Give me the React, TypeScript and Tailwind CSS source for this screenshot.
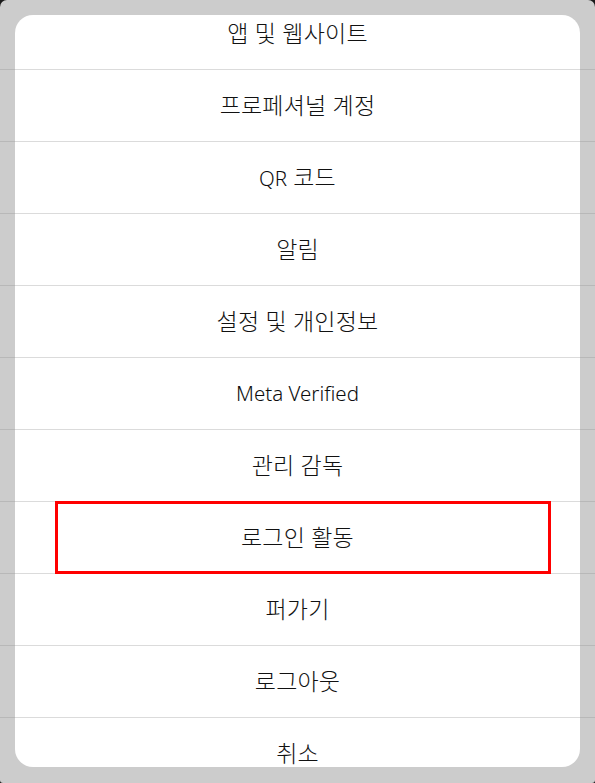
import React from "react";

type Seg = { t: string; latin?: boolean };
const items: Seg[][] = [
  [{ t: "앱 및 웹사이트" }],
  [{ t: "프로페셔널 계정" }],
  [{ t: "QR", latin: true }, { t: " 코드" }],
  [{ t: "알림" }],
  [{ t: "설정 및 개인정보" }],
  [{ t: "Meta Verified", latin: true }],
  [{ t: "관리 감독" }],
  [{ t: "로그인 활동" }],
  [{ t: "퍼가기" }],
  [{ t: "로그아웃" }],
  [{ t: "취소" }],
];

export default function App() {
  return (
    <div className="w-[595px] h-[783px] bg-[#1a1a1a] overflow-hidden">
      <div
        className="relative w-full h-full bg-[#cccccc] rounded-t-[7px] rounded-b-[3px] overflow-hidden"
        style={{ fontFamily: '"Noto Sans", "Noto Sans CJK KR", sans-serif' }}
      >
        {/* background divider lines visible beside the sheet */}
        <div className="absolute inset-x-0 top-[-2px] flex flex-col">
          {items.map((_, i) => (
            <div key={i} className="h-[72px] border-b border-[#b8b8b8] shrink-0" />
          ))}
        </div>
        <div className="relative h-full p-[15px] pb-[16px]">
          <div className="h-full bg-white rounded-[18px] overflow-hidden">
            <div className="mt-[-17px] flex flex-col">
              {items.map((segs, i) => (
                <div
                  key={i}
                  className="relative h-[72px] shrink-0 flex items-center justify-center border-b border-[#dbdbdb] font-light text-[#111111]"
                >
                  <span className="leading-none whitespace-pre flex items-baseline">
                    {segs.map((s, j) => (
                      <span
                        key={j}
                        className={s.latin ? "text-[20.5px] text-[#0d0d0d]" : "text-[23px] tracking-[0.2px]"}
                      >
                        {s.t}
                      </span>
                    ))}
                  </span>
                  {i === 7 && (
                    <div className="absolute left-[40px] top-[-1px] w-[496px] h-[73px] border-[3px] border-[#ff0000]" />
                  )}
                </div>
              ))}
            </div>
          </div>
        </div>
      </div>
    </div>
  );
}
